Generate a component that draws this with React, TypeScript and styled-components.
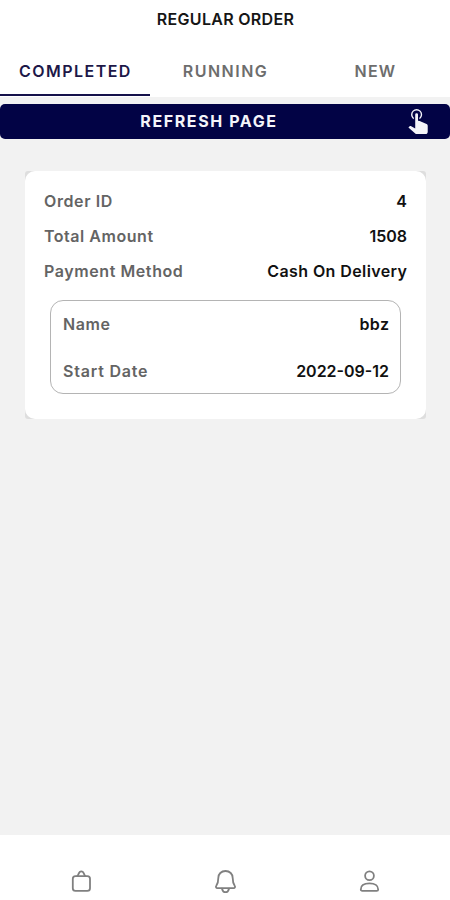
import React from "react";
import styled, { createGlobalStyle } from "styled-components";

const GlobalStyle = createGlobalStyle`
  *, *::before, *::after { box-sizing: border-box; }
  body {
    margin: 0;
    background: #f2f2f2;
    font-family: Inter, "Liberation Sans", sans-serif;
  }
`;

const Screen = styled.div`
  display: flex;
  flex-direction: column;
  width: 450px;
  height: 900px;
  overflow: hidden;
  background: #f2f2f2;
`;

const Header = styled.header`
  height: 97px;
  background: #fff;
`;

const Title = styled.h1`
  margin: 0;
  height: 46px;
  padding: 9px 0 0 1px;
  font-size: 16px;
  line-height: 20px;
  font-weight: 600;
  letter-spacing: 0.3px;
  text-align: center;
  color: #161616;
`;

const Tabs = styled.nav`
  display: grid;
  grid-template-columns: repeat(3, 1fr);
  height: 51px;
`;

const Tab = styled.button<{ $active?: boolean; $spacing: number }>`
  height: 50px;
  padding: 1px 0 0 1px;
  border: 0;
  border-bottom: 2px solid ${(p) => (p.$active ? "#15114a" : "transparent")};
  background: none;
  font: 600 16px/20px Inter, "Liberation Sans", sans-serif;
  letter-spacing: ${(p) => p.$spacing}px;
  color: ${(p) => (p.$active ? "#1d1848" : "#6d6d6d")};
`;

const RefreshButton = styled.button`
  display: flex;
  align-items: center;
  flex: none;
  height: 35px;
  margin-top: 7px;
  padding: 0 22px 1px 0;
  border: 0;
  border-radius: 5px;
  background: #020345;
  color: #f4f4fa;
  font: 700 16px/20px Inter, "Liberation Sans", sans-serif;
`;

const RefreshLabel = styled.span`
  flex: 1;
  padding-left: 10px;
  letter-spacing: 1.6px;
  text-align: center;
`;

const TapIcon = styled.svg`
  display: block;
  flex: none;
  fill: currentColor;
`;

const CardShadow = styled.div`
  margin: 32px 24px 0 25px;
  border-radius: 3px;
  background: #dedede;
`;

const Card = styled.section`
  height: 248px;
  padding: 12px 19px 0;
  border-radius: 10px;
  background: #fff;
`;

const Row = styled.div<{ $height: number }>`
  display: flex;
  align-items: center;
  justify-content: space-between;
  height: ${(p) => p.$height}px;
  font-size: 16px;
  line-height: 20px;
  white-space: nowrap;
`;

const Label = styled.span<{ $spacing: number }>`
  font-weight: 560;
  letter-spacing: ${(p) => p.$spacing}px;
  color: #646464;
`;

const Value = styled.span<{ $spacing?: number }>`
  font-weight: 600;
  letter-spacing: ${(p) => p.$spacing ?? 0}px;
  margin-right: ${(p) => -(p.$spacing ?? 0)}px;
  color: #111;
`;

const Item = styled.div`
  height: 94px;
  margin: 12px 6px 0;
  padding: 0 11px 0 12px;
  border: 1px solid #b4b4b4;
  border-radius: 13px;
`;

const ItemRow = styled(Row)`
  padding-bottom: 2px;
`;

const BottomBar = styled.nav`
  display: grid;
  grid-template-columns: repeat(3, 144px);
  justify-content: center;
  flex: none;
  height: 65px;
  margin-top: auto;
  padding-top: 32px;
  background: #fff;
  justify-items: center;
`;

const LineIcon = styled.svg`
  display: block;
  fill: none;
  stroke: #808080;
  stroke-width: 1.8;
  stroke-linecap: round;
  stroke-linejoin: round;
`;

export default function App() {
  return (
    <>
      <GlobalStyle />
      <Screen>
        <Header>
          <Title>REGULAR ORDER</Title>
          <Tabs>
            <Tab $active $spacing={1.45}>COMPLETED</Tab>
            <Tab $spacing={1.5}>RUNNING</Tab>
            <Tab $spacing={1.2}>NEW</Tab>
          </Tabs>
        </Header>
        <RefreshButton>
          <RefreshLabel>REFRESH PAGE</RefreshLabel>
          <TapIcon width="20" height="25" viewBox="5 5 14 18">
            <path d="M10 9a1 1 0 0 1 1-1 1 1 0 0 1 1 1v4.47l1.21.13 4.94 2.19c.53.24.85.77.85 1.35v4.36c-.03.82-.68 1.47-1.5 1.5H11c-.38 0-.74-.15-1-.43l-4.9-4.2.74-.77c.19-.21.46-.32.74-.32h.22L10 19V9Z" />
            <path d="M11 5a4 4 0 0 1 4 4c0 1.5-.8 2.77-2 3.46v-1.22c.61-.55 1-1.35 1-2.24a3 3 0 0 0-6 0c0 .89.39 1.69 1 2.24v1.22C7.8 11.77 7 10.5 7 9a4 4 0 0 1 4-4Z" />
          </TapIcon>
        </RefreshButton>
        <CardShadow>
          <Card>
            <Row $height={35}>
              <Label $spacing={0.6}>Order ID</Label>
              <Value>4</Value>
            </Row>
            <Row $height={35}>
              <Label $spacing={0.53}>Total Amount</Label>
              <Value>1508</Value>
            </Row>
            <Row $height={35}>
              <Label $spacing={0.58}>Payment Method</Label>
              <Value $spacing={0.4}>Cash On Delivery</Value>
            </Row>
            <Item>
              <ItemRow $height={47}>
                <Label $spacing={0.6}>Name</Label>
                <Value $spacing={0.4}>bbz</Value>
              </ItemRow>
              <ItemRow $height={47}>
                <Label $spacing={0.8}>Start Date</Label>
                <Value>2022-09-12</Value>
              </ItemRow>
            </Item>
          </Card>
        </CardShadow>
        <BottomBar>
          <LineIcon width="28" height="28" viewBox="0 0 28 28">
            <rect x="5.8" y="9.2" width="17.2" height="14.6" rx="2.6" />
            <path d="M10.3 9C11.5 8.3 11.5 4.4 14.3 4.4s2.8 3.9 4 4.6" />
          </LineIcon>
          <LineIcon width="28" height="28" viewBox="0 0 28 28">
            <path d="M14.5 4c-4.3 0-7.2 3-7.2 6.9 0 4.4-.7 6-2 7.9-.8 1.1-.2 2.4 1.1 2.4h16.2c1.3 0 1.9-1.3 1.1-2.4-1.3-1.9-2-3.5-2-7.9 0-3.9-2.9-6.9-7.2-6.9Z" />
            <path d="M11 21.7c.6 2.5 1.8 3.5 3.5 3.5s2.9-1 3.5-3.5" />
          </LineIcon>
          <LineIcon width="28" height="28" viewBox="0 0 28 28">
            <circle cx="14.5" cy="8.8" r="4.4" />
            <path d="M5.8 22.4c0-4 3.3-6 8.7-6s8.7 2 8.7 6c0 .9-.6 1.5-1.5 1.5H7.3c-.9 0-1.5-.6-1.5-1.5Z" />
          </LineIcon>
        </BottomBar>
      </Screen>
    </>
  );
}
